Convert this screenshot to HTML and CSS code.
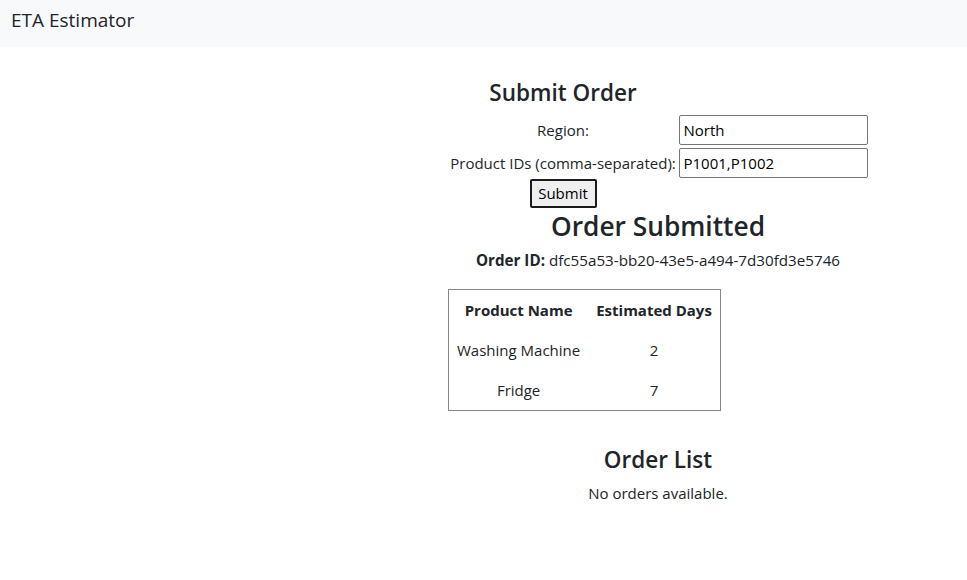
FILE: index.html
```html
<!DOCTYPE html>
<html lang="en">
<head>
<meta charset="utf-8">
<title>ETA Estimator</title>
<link rel="stylesheet" href="styles.css">
</head>
<body>
<nav class="navbar"><span class="brand">ETA Estimator</span></nav>
<main class="main">
  <section class="content">
    <form class="order-form" onsubmit="return false">
      <h4 class="form-title">Submit Order</h4>
      <span class="form-empty"></span>
      <label class="form-label" for="region">Region:</label>
      <input class="form-input" id="region" type="text" value="North">
      <label class="form-label" for="products">Product IDs (comma-separated):</label>
      <input class="form-input" id="products" type="text" value="P1001,P1002">
      <div class="form-actions"><button class="submit-btn" type="submit">Submit</button></div>
    </form>

    <div class="result">
      <h2 class="result-title">Order Submitted</h2>
      <p class="order-id"><strong>Order ID:</strong> dfc55a53-bb20-43e5-a494-7d30fd3e5746</p>
      <table class="eta-table">
        <thead>
          <tr><th>Product Name</th><th>Estimated Days</th></tr>
        </thead>
        <tbody>
          <tr><td>Washing Machine</td><td>2</td></tr>
          <tr><td>Fridge</td><td>7</td></tr>
        </tbody>
      </table>
    </div>

    <div class="order-list">
      <h4 class="list-title">Order List</h4>
      <p class="empty-note">No orders available.</p>
    </div>
  </section>
</main>
</body>
</html>
```

FILE: styles.css
```css
* { box-sizing: border-box; }
body {
  margin: 0;
  font-family: "Open Sans", "Noto Sans", sans-serif;
  font-size: 15px;
  line-height: 1.5;
  color: #212529;
  background: #fff;
}
.navbar {
  height: 47px;
  background: #f8f9fa;
  padding: 5px 11px 0;
}
.brand {
  font-size: 19px;
  line-height: 30px;
}
.main {
  padding-top: 32px;
}
.content {
  margin-left: 448px;
  width: 420px;
}
.order-form {
  display: grid;
  grid-template-columns: 229px 189px;
  column-gap: 1px;
  row-gap: 3px;
  align-items: center;
  margin: 0 auto;
  width: 419px;
}
.form-title {
  margin: 0 0 5px;
  font-size: 22.5px;
  font-weight: 600;
  line-height: 28px;
  text-align: center;
}
.form-label {
  text-align: center;
  white-space: nowrap;
}
.form-input {
  height: 30px;
  border: 1px solid #767676;
  border-radius: 2px;
  padding: 1px 4px;
  font: inherit;
  font-size: 15px;
  color: #000;
  width: 189px;
}
.form-actions {
  text-align: center;
  margin-top: -2px;
}
.submit-btn {
  height: 29px;
  width: 67px;
  border: 2px solid #1a1a1a;
  border-radius: 2px;
  background: #efefef;
  font: inherit;
  font-size: 15px;
  color: #000;
  padding: 0;
  vertical-align: top;
}
.result {
  text-align: center;
}
.result-title {
  margin: 0 0 5px;
  font-size: 26.3px;
  font-weight: 600;
  line-height: 36px;
}
.order-id {
  margin: 0 0 17px;
  font-size: 15.2px;
}
.eta-table {
  border: 1px solid #888;
  border-collapse: separate;
  border-spacing: 0;
}
.eta-table th,
.eta-table td {
  padding: 8px;
  line-height: 24px;
  text-align: center;
}
.eta-table th {
  font-weight: 700;
}
.order-list {
  text-align: center;
  margin-top: 35px;
}
.list-title {
  margin: 0 0 8px;
  font-size: 22.5px;
  font-weight: 600;
  line-height: 28px;
}
.empty-note {
  margin: 0;
}
```
